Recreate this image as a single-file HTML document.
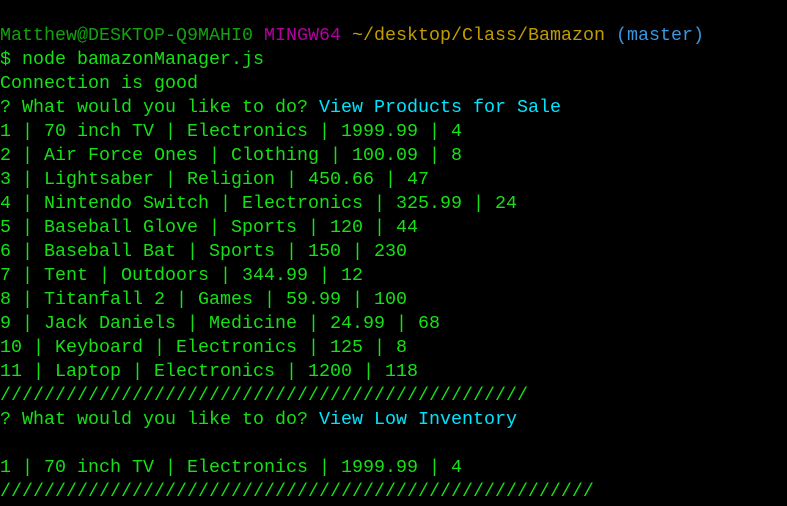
<!DOCTYPE html>
<html><head><style>
html,body{margin:0;padding:0;background:#000;width:787px;height:506px;overflow:hidden}
pre{margin:0;position:absolute;left:0;top:24px;font-family:"Liberation Mono",monospace;font-size:18.33px;line-height:24px;color:#16e016;white-space:pre}
.g{color:#13a10e}.p{color:#b4009e}.y{color:#c19c00}.t{color:#3a96dd}.c{color:#00e5ff}
</style></head><body><pre><span class="g">Matthew@DESKTOP-Q9MAHI0</span> <span class="p">MINGW64</span> <span class="y">~/desktop/Class/Bamazon</span> <span class="t">(master)</span>
$ node bamazonManager.js
Connection is good
? What would you like to do? <span class="c">View Products for Sale</span>
1 | 70 inch TV | Electronics | 1999.99 | 4
2 | Air Force Ones | Clothing | 100.09 | 8
3 | Lightsaber | Religion | 450.66 | 47
4 | Nintendo Switch | Electronics | 325.99 | 24
5 | Baseball Glove | Sports | 120 | 44
6 | Baseball Bat | Sports | 150 | 230
7 | Tent | Outdoors | 344.99 | 12
8 | Titanfall 2 | Games | 59.99 | 100
9 | Jack Daniels | Medicine | 24.99 | 68
10 | Keyboard | Electronics | 125 | 8
11 | Laptop | Electronics | 1200 | 118
////////////////////////////////////////////////
? What would you like to do? <span class="c">View Low Inventory</span>

1 | 70 inch TV | Electronics | 1999.99 | 4
//////////////////////////////////////////////////////
</pre></body></html>
